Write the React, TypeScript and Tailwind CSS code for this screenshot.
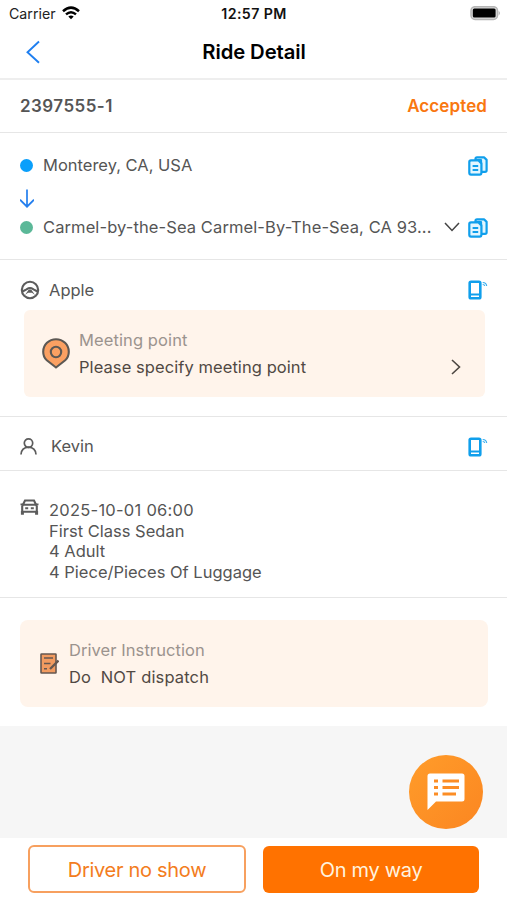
function CopyIcon() {
    return (
        <svg className="w-5 h-5 mt-px shrink-0" viewBox="0 0 20 20" fill="#e2f6ff" stroke="#109fec" strokeWidth="2.2" strokeLinejoin="round">
            <path d="M7.5 4V2.8Q7.5 1.3 9 1.3H16L18.6 3.9V14.2Q18.6 15.8 17 15.8H13V4Z" />
            <path d="M3 4.3H10.3L13.4 7.4V16.8Q13.4 18.6 11.7 18.6H3Q1.3 18.6 1.3 16.8V6Q1.3 4.3 3 4.3Z" />
            <path d="M4.6 10H10.2M4.6 14H10.2" fill="none" strokeWidth="2" />
        </svg>
    );
}

function PhoneIcon() {
    return (
        <svg className="w-5 h-5 shrink-0" viewBox="0 0 20 20" fill="none" stroke="#109fec">
            <rect x="1.7" y="1.7" width="10.6" height="16.6" rx="1.3" strokeWidth="2.6" />
            <path d="M2 14.5H12" strokeWidth="2" />
            <path d="M14.7 2.5Q18.3 2.5 18.7 6M14.7 4.5Q16.5 4.5 16.8 6" strokeWidth="1.1" opacity="0.85" />
        </svg>
    );
}

function StatusBar() {
    return (
        <div className="flex items-center justify-between h-7 pl-[9px] pr-[6px] text-[14.2px] text-[#222]">
            <div className="flex items-center gap-[6px] w-[100px]">
                <span>Carrier</span>
                <svg className="w-[18px] h-[14px] -mt-px" viewBox="0 0 18 14" fill="none" stroke="#000" strokeWidth="2.5">
                    <path d="M1 5.2Q9-2 17 5.2M4 8.4Q9 4.1 14 8.4" />
                    <path d="M9 13.3L6.3 10.6Q9 8.4 11.7 10.6Z" fill="#000" stroke="none" />
                </svg>
            </div>
            <span className="pr-[2px] font-semibold text-[#111] tracking-[0.4px]">12:57 PM</span>
            <div className="flex justify-end w-[100px] pb-px">
                <svg className="w-[31px] h-[15px]" viewBox="0 0 31 15">
                    <rect x="1" y="0.7" width="26.5" height="12.8" rx="4" fill="#ddd" stroke="#b5b5b5" strokeWidth="1.5" />
                    <rect x="2.8" y="2.6" width="22.8" height="9" rx="1.5" />
                    <path d="M28.7 4.7Q31 7.1 28.7 9.5Z" fill="#aaa" />
                </svg>
            </div>
        </div>
    );
}

function Header() {
    return (
        <div className="flex items-center h-[52px] px-[25px] pb-[2px] border-b-2 border-[#eee]">
            <svg className="w-4 h-6" viewBox="0 0 16 24" fill="none" stroke="#1f7ff0" strokeWidth="1.9">
                <path d="M14 1.5L2.5 12.2L14 22.8" />
            </svg>
            <h1 className="flex-1 pt-px pr-[15px] text-center text-[20.3px] font-semibold text-black tracking-[-0.1px]">Ride Detail</h1>
        </div>
    );
}

function Route() {
    return (
        <section className="h-[127px] pt-[20px] pl-[20px] pr-[19px] border-b border-[#e6e6e6]">
            <div className="flex items-center h-6">
                <span className="w-[13px] h-[13px] rounded-full bg-[#0a9ffb]" />
                <span className="flex-1 pl-[10px]">Monterey, CA, USA</span>
                <CopyIcon />
            </div>
            <svg className="w-[14px] h-5 mt-[11px] mb-[7px]" viewBox="0 0 14 20" fill="none" stroke="#247fee" strokeWidth="1.7">
                <path d="M7 1.5V18.5M0 11.7L7 18.7L14 11.7" />
            </svg>
            <div className="flex items-center h-6">
                <span className="w-[13px] h-[13px] rounded-full bg-[#5bb898]" />
                <span className="flex-1 pl-[10px] whitespace-nowrap tracking-[0.1px]">Carmel-by-the-Sea Carmel-By-The-Sea, CA 93...</span>
                <svg className="w-4 h-5 mr-[8px]" viewBox="0 0 16 20" fill="none" stroke="#444" strokeWidth="1.5">
                    <path d="M1 6L8 13.5L15 6" />
                </svg>
                <CopyIcon />
            </div>
        </section>
    );
}

function Driver() {
    return (
        <section className="h-[157px] pt-[18px] border-b border-[#e6e6e6]">
            <div className="flex items-center h-6 pl-[20px] pr-[19px]">
                <svg className="w-5 h-5" viewBox="0 0 20 20" fill="none" stroke="#5c5c5c" strokeWidth="2.1">
                    <circle cx="10" cy="10" r="8.2" />
                    <path d="M2.5 11.5L6.5 9.3Q8.5 8 10 8Q11.5 8 13.5 9.3L17.5 11.5" />
                    <path d="M5 15L8.8 9.5H11.2L15 15L12 12.8H8Z" fill="#5c5c5c" stroke="none" />
                </svg>
                <span className="flex-1 pl-[9px]">Apple</span>
                <PhoneIcon />
            </div>
            <div className="flex items-center h-[87px] mt-2 ml-6 mr-[22px] pl-[18px] pr-[24px] rounded-md bg-[#fff4eb]">
                <svg className="w-7 h-8" viewBox="0 0 28 32" fill="#fba062" stroke="#5c5854" strokeWidth="2.1">
                    <path d="M14 29.5L4.8 22.3Q1.2 19 1.2 13.7A12.8 12.5 0 0 1 26.8 13.7Q26.8 19 23.2 22.3Z" />
                    <circle cx="14" cy="14" r="5.2" />
                </svg>
                <div className="flex-1 pl-[9px]">
                    <div className="h-[27px] leading-[27px] tracking-[0.1px] text-[#9b938e]">Meeting point</div>
                    <div className="h-[27px] leading-[27px] tracking-[0.07px] text-[#514943]">Please specify meeting point</div>
                </div>
                <svg className="w-[10px] h-4 mt-[27px]" viewBox="0 0 10 16" fill="none" stroke="#4d4742" strokeWidth="1.6">
                    <path d="M1 1L8.5 8L1 15" />
                </svg>
            </div>
        </section>
    );
}

function Passenger() {
    return (
        <section className="flex items-center h-[54px] pt-[6px] pl-[20px] pr-[19px] border-b border-[#e6e6e6]">
            <svg className="w-[17px] h-[17px]" viewBox="0 0 17 17" fill="none" stroke="#5c5c5c" strokeWidth="1.7">
                <circle cx="8.5" cy="5.1" r="4.2" />
                <path d="M1 16.5Q1.5 9.5 8.5 9.2Q15.5 9.5 16 16.5" />
            </svg>
            <span className="flex-1 pl-[14px]">Kevin</span>
            <PhoneIcon />
        </section>
    );
}

function Vehicle() {
    return (
        <section className="flex h-[127px] pt-[29px] pl-[20px] border-b border-[#e6e6e6]">
            <svg className="w-[19px] h-4 -mt-px" viewBox="0 0 19 16" fill="none" stroke="#5c5c5c" strokeWidth="2.1">
                <path d="M2.2 14.5V7.2L5 1.5H14L16.8 7.2V14.5M2 12.8H17M3 5.8H16" />
                <path d="M0.5 5.4H3M16 5.4H18.5" strokeWidth="1.7" />
                <path d="M5.2 9.3H8.2M10.8 9.3H13.8" strokeWidth="2" />
                <path d="M2.4 12V15.8M16.6 12V15.8" strokeWidth="3" />
            </svg>
            <div className="pl-[10px] leading-[20.6px]">
                <div className="tracking-[0.25px]">2025-10-01 06:00</div>
                <div>First Class Sedan</div>
                <div>4 Adult</div>
                <div>4 Piece/Pieces Of Luggage</div>
            </div>
        </section>
    );
}

function Instruction() {
    return (
        <section className="h-[128px] pt-[22px] pl-[20px] pr-[19px]">
            <div className="flex items-center h-[87px] pl-[20px] rounded-lg bg-[#fff4eb]">
                <svg className="w-[19px] h-[21px]" viewBox="0 0 19 21" fill="#f29b60" stroke="#655750" strokeWidth="1.6">
                    <rect x="1" y="1" width="15" height="19" rx="0.5" />
                    <path d="M4 5H13M4 10.5H10.5M4 15.8H7" />
                    <path d="M10 16L18.5 7.5" strokeWidth="2.3" />
                </svg>
                <div className="pl-[10px] whitespace-pre">
                    <div className="h-[27px] leading-[27px] tracking-[0.07px] text-[#9b938e]">Driver Instruction</div>
                    <div className="h-[27px] leading-[27px] tracking-[0.15px] text-[#514943]">{"Do  NOT dispatch"}</div>
                </div>
            </div>
        </section>
    );
}

function ChatButton() {
    return (
        <button className="flex items-center justify-center w-[74px] h-[74px] rounded-full bg-linear-to-br from-[#ff9c2a] to-[#fb8621]">
            <svg className="w-[38px] h-[38px]" viewBox="0 0 38 38">
                <path d="M3 0.5H35Q37.5 0.5 37.5 3V26Q37.5 28.5 35 28.5H9L0.5 37V3Q0.5 0.5 3 0.5Z" fill="#fff" />
                <path d="M7 8H11M15.5 8H32M7 14.5H11M15.5 14.5H32M7 21H11M15.5 21H29" stroke="#fc8d25" strokeWidth="2.8" />
            </svg>
        </button>
    );
}

export default function App() {
    return (
        <div className="flex flex-col w-[507px] h-[900px] overflow-hidden bg-white text-[16.5px] text-[#555] font-['Inter',sans-serif]">
            <StatusBar />
            <Header />
            <section className="flex items-center justify-between h-[53px] pt-[2px] px-[20px] border-b border-[#e6e6e6] text-[17px] font-semibold">
                <span className="tracking-[0.45px]">2397555-1</span>
                <span className="text-[#f9770f] tracking-[0.1px]">Accepted</span>
            </section>
            <Route />
            <Driver />
            <Passenger />
            <Vehicle />
            <Instruction />
            <div className="flex items-start justify-end flex-1 pt-[29px] pr-[24px] bg-[#f6f6f6]">
                <ChatButton />
            </div>
            <div className="flex gap-[17px] h-[62px] pt-[7px] pl-7 pr-7 text-[20px] tracking-[-0.3px]">
                <button className="w-[218px] h-12 pt-[2px] rounded-md border-2 border-[#f7a05f] text-[#f37c20]">Driver no show</button>
                <button className="w-[216px] h-[47px] mt-px rounded-md bg-[#ff7200] text-[#fff3df]">On my way</button>
            </div>
        </div>
    );
}
